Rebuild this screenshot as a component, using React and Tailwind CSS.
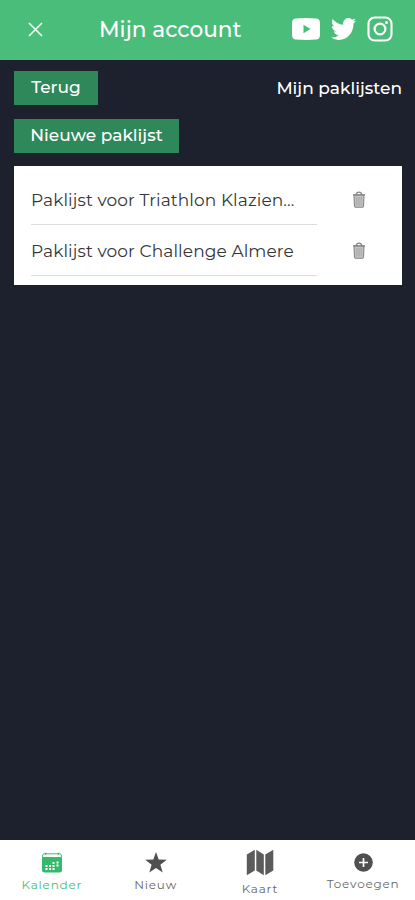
const TrashIcon = () => (
  <svg width="14" height="17" viewBox="0 0 14 17" fill="none">
    <path d="M2 4h10l-.5 11.2q-.1 1-1.1 1H3.600q-1 0-1.100-1z" fill="#c4c4c4" stroke="#858585" strokeWidth="1.100" />
    <path d="M1 3.800h12M4.300 3.500q.3-2.300 2.700-2.300t2.700 2.300" stroke="#858585" strokeWidth="1.200" />
    <path d="M4.800 6v8.500M7 6v8.500M9.200 6v8.500" stroke="#a0a0a0" strokeWidth=".9" />
  </svg>
);

const YoutubeIcon = () => (
  <svg width="28" height="22" viewBox="0 0 28 22">
    <path fillRule="evenodd" fill="#fff" d="M4 .5Q14-.3 24 .5q3.700.3 3.900 3.800.3 6.700 0 13.400-.2 3.500-3.900 3.800-10 .8-20 0Q.3 21.200.1 17.700q-.3-6.700 0-13.400Q.3.800 4 .5zM11.500 6.800v8.400l7-4.200z" />
  </svg>
);

const TwitterIcon = () => (
  <svg width="25" height="22" viewBox="0 2.200 24 19.600" preserveAspectRatio="none">
    <path fill="#fff" d="M23.953 4.570a10 10 0 01-2.825.775 4.958 4.958 0 002.163-2.723c-.951.555-2.005.959-3.127 1.184a4.920 4.920 0 00-8.384 4.482C7.690 8.095 4.067 6.130 1.640 3.162a4.822 4.822 0 00-.666 2.475c0 1.710.870 3.213 2.188 4.096a4.904 4.904 0 01-2.228-.616v.060a4.923 4.923 0 003.946 4.827 4.996 4.996 0 01-2.212.085 4.936 4.936 0 004.604 3.417 9.867 9.867 0 01-6.102 2.105c-.390 0-.779-.023-1.170-.067a13.995 13.995 0 007.557 2.209c9.053 0 13.998-7.496 13.998-13.985 0-.210 0-.420-.015-.630A9.935 9.935 0 0024 4.590z" />
  </svg>
);

const InstagramIcon = () => (
  <svg width="26" height="26" viewBox="0 0 26 26" fill="none" stroke="#fff">
    <rect x="1.500" y="1.500" width="23" height="23" rx="6.200" strokeWidth="2.100" />
    <circle cx="13" cy="13" r="5.400" strokeWidth="2.200" />
    <circle cx="19.500" cy="6.500" r="1.500" fill="#fff" stroke="none" />
  </svg>
);

const CalendarIcon = () => (
  <svg width="22" height="21" viewBox="0 0 22 21">
    <path d="M1.500 5.500V4q0-2.200 2-2.200h15q2 0 2 2.200v1.500z" fill="#fff" stroke="#3fbd73" strokeWidth="1" />
    <path d="M1 5.800h20V18q0 2.500-2.500 2.500h-15Q1 20.500 1 18z" fill="#35b96b" />
    <path d="M4.500.8v2M17.500.8v2" stroke="#35b96b" strokeWidth="1.400" />
    <path fill="#fff" d="M4.500 13h2v2h-2zM4.500 16h2v2h-2zM8 13h2v2H8zM8 16h2v2H8zM11.500 10h2v2h-2zM11.500 13h2v2h-2zM11.500 16h2v2h-2zM15.500 9.500h2v2h-2zM15.500 12.500h2v2h-2z" />
  </svg>
);

const StarIcon = () => (
  <svg width="22" height="21" viewBox="0 0 22 21">
    <path fill="#505050" d="M11 0l2.700 7.600 8.100.2-6.400 5 2.300 7.800L11 16l-6.700 4.600 2.300-7.800-6.400-5 8.100-.2z" />
  </svg>
);

const MapIcon = () => (
  <svg width="28" height="27" viewBox="0 0 28 27" fill="#5b5b5b">
    <path d="M.8 5.500L8.800.8v20.700L.8 26.200zM10.300 .8l7.500 4.700v20.700l-7.500-4.700zM19.300 5.500L27.300 .8v20.700l-8 4.700z" />
  </svg>
);

const AddIcon = () => (
  <svg width="19" height="19" viewBox="0 0 19 19">
    <circle cx="9.500" cy="9.500" r="9.300" fill="#505050" />
    <path d="M9.500 5v9M5 9.500h9" stroke="#fff" strokeWidth="1.700" />
  </svg>
);

const lists = ["Paklijst voor Triathlon Klazien...", "Paklijst voor Challenge Almere"];

export default function App() {
  return (
    <div className="flex h-[900px] w-full flex-col bg-[#1d212e] font-['Montserrat','Inter',sans-serif]">
      <header className="flex h-[60px] shrink-0 items-center bg-[#4abd7a] pb-[3px] pl-[28px] pr-[22px] text-white">
        <svg width="15" height="15" viewBox="0 0 15 15" className="mt-[2px]">
          <path d="M1 1l13 13M14 1L1 14" stroke="#f2fff5" strokeWidth="1.600" />
        </svg>
        <h1 className="ml-[56px] whitespace-nowrap text-[21.6px] font-medium leading-7">Mijn account</h1>
        <div className="ml-auto flex items-center gap-[11px]">
          <YoutubeIcon />
          <TwitterIcon />
          <InstagramIcon />
        </div>
      </header>

      <main className="flex-1 pl-[14px] pr-[13px] pt-[11px]">
        <div className="flex h-[34px] items-center justify-between text-white">
          <button className="h-[34px] w-[84px] bg-[#2f885a] text-[17px] font-medium">Terug</button>
          <span className="whitespace-nowrap pt-[2px] text-[17px] font-medium">Mijn paklijsten</span>
        </div>
        <button className="mt-[14px] block h-[34px] w-[165px] whitespace-nowrap bg-[#2f885a] text-[17px] font-medium text-white">Nieuwe paklijst</button>
        <ul className="mt-[13px] h-[119px] bg-white pl-[17px] pt-[8px]">
          {lists.map((name) => (
            <li key={name} className="flex h-[51px] items-center">
              <div className="flex h-[51px] w-[286px] items-center border-b border-[#dedede] pt-[4px]">
                <span className="whitespace-nowrap text-[17px] tracking-[0.1px] text-[#343639]">{name}</span>
              </div>
              <button aria-label="Verwijderen" className="ml-[35px]"><TrashIcon /></button>
            </li>
          ))}
        </ul>
      </main>

      <nav className="grid h-[60px] shrink-0 grid-cols-4 bg-white text-[12px] leading-[15px] tracking-[0.8px] text-[#686868]">
        <a className="flex flex-col items-center pt-[12px] text-[#49bc78]"><CalendarIcon /><span className="mt-[4px]">Kalender</span></a>
        <a className="flex flex-col items-center pt-[12px]"><StarIcon /><span className="mt-[4px]">Nieuw</span></a>
        <a className="flex flex-col items-center pl-[1px] pt-[9px]"><MapIcon /><span className="mt-[5px]">Kaart</span></a>
        <a className="flex flex-col items-center pt-[13px]"><AddIcon /><span className="mt-[4px]">Toevoegen</span></a>
      </nav>
    </div>
  );
}
